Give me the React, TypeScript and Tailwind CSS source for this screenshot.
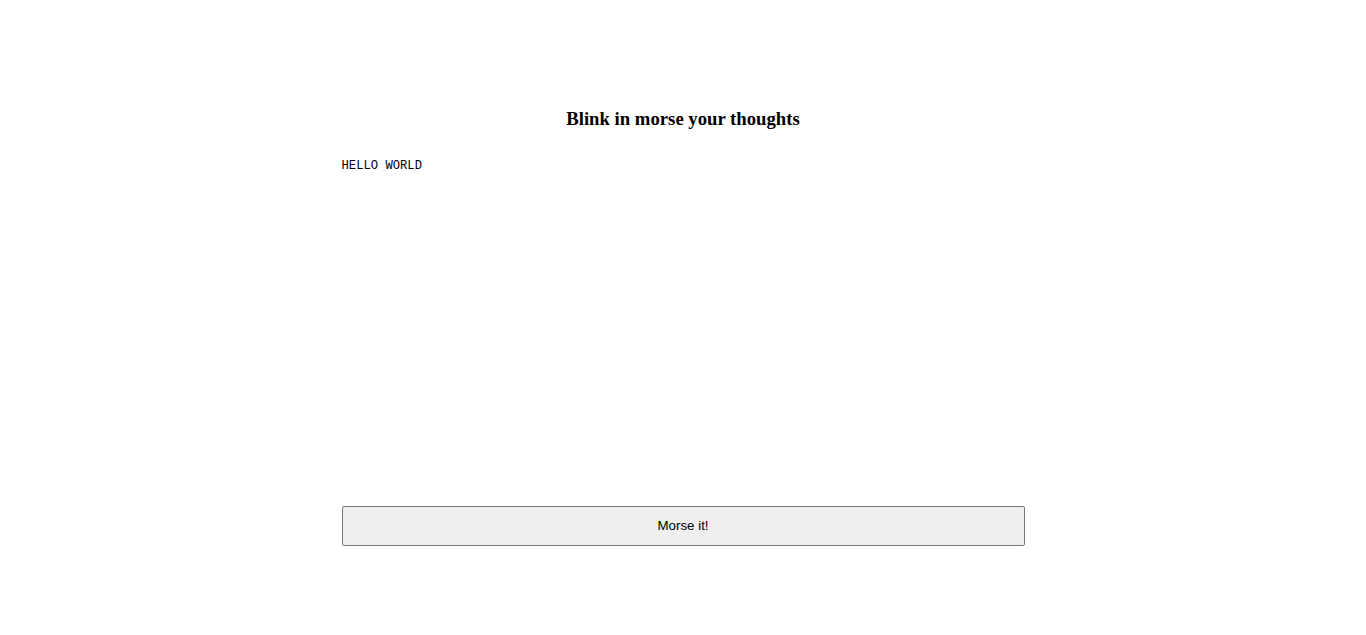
import React from "react";

const App = () => {
  const [text, setText] = React.useState<string>("HELLO WORLD");

  return (
    <div className="w-full min-h-[635px] bg-white flex justify-center">
      <div className="w-[683px] flex flex-col pt-[108px]">
        <h3 className="text-center text-[18.72px] leading-[21px] font-bold text-black font-['Liberation_Serif',serif]">
          Blink in morse your thoughts
        </h3>
        <textarea
          value={text}
          onChange={(e) => setText(e.target.value)}
          className="mt-[27px] h-[340px] w-full p-0 pt-[3px] border-0 outline-none resize-none text-[12.2px] leading-[15px] text-black font-['Liberation_Mono',monospace]"
        />
        <button className="mt-[10px] h-[40px] w-full bg-[#efefef] border border-[#767676] rounded-[2px] text-[13.33px] text-black font-['Liberation_Sans',Arial,sans-serif]">
          Morse it!
        </button>
      </div>
    </div>
  );
};

export default App;
